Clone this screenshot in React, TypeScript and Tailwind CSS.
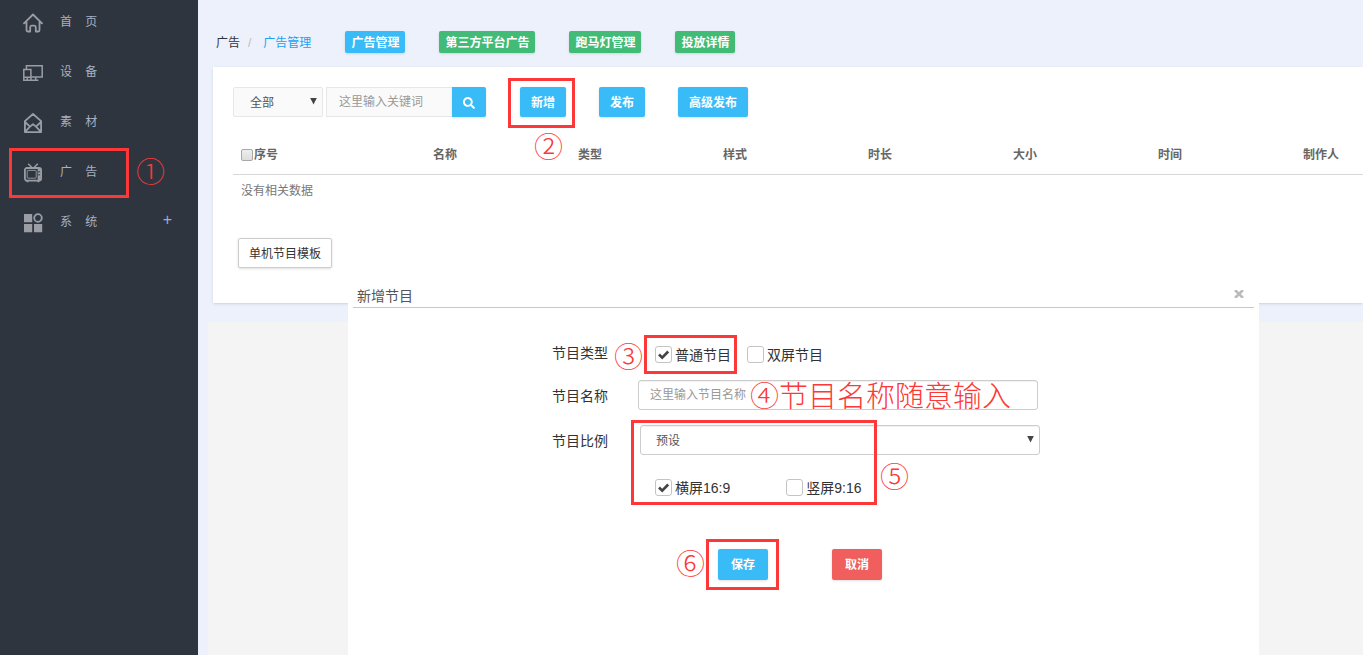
import type { ReactNode } from "react"
import { FaSearch } from "react-icons/fa"

const menu = [
  { label: "首    页", icon: <HomeIcon /> },
  { label: "设    备", icon: <DeviceIcon /> },
  { label: "素    材", icon: <MaterialIcon /> },
  { label: "广    告", icon: <TvIcon /> },
  { label: "系    统", icon: <SystemIcon />, expandable: true },
]

const columns = ["名称", "类型", "样式", "时长", "大小", "时间"]

function HomeIcon() {
  return (
    <svg viewBox="0 0 20 20" className="mt-0.5 size-5" fill="none" stroke="currentColor" strokeWidth="1.8" strokeLinecap="round" strokeLinejoin="round">
      <path d="M1 10.4 10 1.5l9 8.9M3.5 8.8v8.5q0 1.2 1.2 1.2h2.5v-4.3q0-1.6 1.4-1.6h2.8q1.4 0 1.4 1.6v4.3h2.5q1.2 0 1.2-1.2V8.8" />
    </svg>
  )
}

function DeviceIcon() {
  return (
    <svg viewBox="0 0 20 20" className="mt-0.5 size-5" fill="none" stroke="currentColor" strokeWidth="1.5">
      <path d="M3.4 6V2.7h15.8v11.2H8.4M.8 6.4h7.1v10.9H.8zM.8 14.3h7.1M4.3 14.3v3M12.7 14v3M8 17.2h7.4" />
    </svg>
  )
}

function MaterialIcon() {
  return (
    <svg viewBox="0 0 20 20" className="mt-0.5 size-5" fill="none" stroke="currentColor" strokeWidth="1.8" strokeLinejoin="round">
      <path d="M1.9 8.2 10 1l8.1 7.2v10.9H1.9zM2 9l5 4.6 3-2.4 3 2.4L18 9M2 18.8l5-5.2M18 18.8l-5-5.2" />
    </svg>
  )
}

function TvIcon() {
  return (
    <svg viewBox="0 0 20 20" className="mt-0.5 size-5" fill="none" stroke="currentColor">
      <path d="M5.2.8 9.4 5M14.8.8 10.6 5" strokeWidth="1.5" />
      <rect x="1.9" y="5" width="16.2" height="12.6" rx="2" strokeWidth="1.8" />
      <rect x="4.2" y="7.4" width="9" height="7.8" rx="0.8" strokeWidth="0.9" />
      <path d="M16.2 5v12.4" strokeWidth="3" />
      <path d="M16 8v1.6M16 11v1.6" stroke="#2f353f" strokeWidth="1.3" />
      <path d="M4.6 17.5v1.8M15.4 17.5v1.8" strokeWidth="1.8" />
    </svg>
  )
}

function SystemIcon() {
  return (
    <svg viewBox="0 0 20 20" className="mt-0.5 size-5" fill="currentColor">
      <path d="M1 1h8.2v8.2H1zM1 11h8.2v8.2H1zM11 11h8.2v8.2H11z" />
      <circle cx="15" cy="5" r="3.8" fill="none" stroke="currentColor" strokeWidth="1.8" />
    </svg>
  )
}

function CaretIcon() {
  return (
    <svg viewBox="0 0 7 7" className="pointer-events-none absolute top-[11px] right-1.5 size-[7px]" fill="#444">
      <path d="M.2 0h6.6L3.5 6.6z" />
    </svg>
  )
}

function Sidebar() {
  return (
    <aside className="w-[198px] shrink-0 bg-[#2f353f] pt-[7px]">
      <nav className="flex flex-col gap-5 pr-[26px] pl-[23px]">
        {menu.map((item) => (
          <a key={item.label} href="#" className="flex h-[30px] items-center text-[#9a9da3]">
            {item.icon}
            <span className="ml-[17px] whitespace-pre text-[#a7b1c2]">{item.label}</span>
            {item.expandable && <span className="ml-auto pb-1 text-base leading-5 text-[#8fb0e0]">+</span>}
          </a>
        ))}
      </nav>
    </aside>
  )
}

function TabButton({ active, children }: { active?: boolean; children: ReactNode }) {
  return (
    <button
      type="button"
      className={`h-[22px] rounded-xs px-1.5 pt-0.5 font-bold text-white shadow-sm ${active ? "bg-[#39bbf8]" : "bg-[#42bb76]"}`}
    >
      {children}
    </button>
  )
}

function ToolButton({ children }: { children: ReactNode }) {
  return (
    <button type="button" className="h-[30px] rounded-xs bg-[#39bbf8] px-[11px] pt-0.5 font-bold text-white shadow-sm">
      {children}
    </button>
  )
}

function CheckOption({ label, checked }: { label: string; checked?: boolean }) {
  return (
    <label className="flex items-center gap-0.5 text-sm text-[#333]">
      <span className="relative flex size-[18px]">
        <input
          type="checkbox"
          defaultChecked={checked}
          className="peer size-[17px] appearance-none rounded-[3px] border border-[#c4c4c4] bg-white"
        />
        <svg
          viewBox="0 0 17 17"
          className="pointer-events-none absolute top-0 left-0 hidden size-[17px] peer-checked:block"
          fill="none"
          stroke="#444"
          strokeWidth="2.6"
        >
          <path d="m4 8.5 3.2 3.2 6-6.2" />
        </svg>
      </span>
      <span className="leading-5">{label}</span>
    </label>
  )
}

function ProgramTable() {
  return (
    <table className="mt-[17px] w-full table-fixed text-left text-[#666]">
      <thead>
        <tr className="border-b border-[#d8d8d8]">
          <th className="w-[192px] px-2 pt-[11px] pb-[9px]">
            <label className="flex items-center">
              <input
                type="checkbox"
                className="size-3 appearance-none rounded-xs border border-[#a8a8a8] bg-linear-to-b from-[#eee] to-[#ddd]"
              />
              <span className="ml-px">序号</span>
            </label>
          </th>
          {columns.map((name) => (
            <th key={name} className="w-[145px] px-2 pt-[11px] pb-[9px]">
              {name}
            </th>
          ))}
          <th className="px-2 pt-[11px] pb-[9px]">制作人</th>
        </tr>
      </thead>
      <tbody>
        <tr>
          <td colSpan={8} className="px-2 pt-1.5 pb-1 text-[#777]">
            没有相关数据
          </td>
        </tr>
      </tbody>
    </table>
  )
}

function CreateDialog() {
  return (
    <section
      role="dialog"
      aria-labelledby="dialog-title"
      className="absolute top-[265px] right-[104px] bottom-0 left-[348px] bg-white px-[5px] pt-5"
    >
      <header className="flex items-center justify-between border-b border-[#c8c8c8] px-1">
        <h2 id="dialog-title" className="text-sm leading-[22px] text-[#555]">
          新增节目
        </h2>
        <button type="button" aria-label="关闭" className="mr-1.5 pb-1 text-[#bbb]">
          <svg viewBox="0 0 10 8" className="h-2 w-2.5" fill="none" stroke="currentColor" strokeWidth="2.6">
            <path d="m1 0 8 8M9 0 1 8" />
          </svg>
        </button>
      </header>
      <form className="pt-8 pl-[199px] text-sm text-[#333]" onSubmit={(e) => e.preventDefault()}>
        <div className="flex h-[30px] items-center">
          <span className="pb-1">节目类型</span>
          <div className="flex gap-4 pl-[47px]">
            <CheckOption label="普通节目" checked />
            <CheckOption label="双屏节目" />
          </div>
        </div>
        <div className="mt-2.5 flex items-center gap-[30px]">
          <label htmlFor="program-name" className="pt-0.5">
            节目名称
          </label>
          <input
            id="program-name"
            type="text"
            placeholder="这里输入节目名称"
            className="h-[30px] w-[400px] rounded-[3px] border border-[#ccc] px-[11px] text-xs inset-shadow-2xs placeholder:text-[#999]"
          />
        </div>
        <div className="mt-[15px] flex items-center gap-8">
          <label htmlFor="program-ratio" className="pt-0.5">
            节目比例
          </label>
          <div className="relative flex">
            <select
              id="program-ratio"
              className="h-[30px] w-[400px] appearance-none rounded-[3px] border border-[#ccc] bg-white px-[15px] pt-0.5 text-xs text-[#555] inset-shadow-2xs"
            >
              <option>预设</option>
            </select>
            <CaretIcon />
          </div>
        </div>
        <div className="mt-[18px] flex h-[30px] items-center gap-14 pl-[103px]">
          <CheckOption label="横屏16:9" checked />
          <CheckOption label="竖屏9:16" />
        </div>
        <div className="mt-[46px] flex gap-16 pl-[166px] text-xs font-bold text-white">
          <button type="submit" className="h-[31px] rounded-xs bg-[#39bbf8] px-[13px] shadow-sm">
            保存
          </button>
          <button type="button" className="h-[31px] rounded-xs bg-[#f05f5d] px-[13px] shadow-sm">
            取消
          </button>
        </div>
      </form>
    </section>
  )
}

// Numbered walkthrough steps drawn over the screen
function Steps() {
  return (
    <div className="pointer-events-none absolute inset-0 font-['Noto_Sans_CJK_SC',sans-serif] text-[29px] leading-[29px] font-light whitespace-nowrap text-[#fc3838]">
      <div className="absolute top-[148px] left-[9px] h-[50px] w-[120px] border-3" />
      <span className="absolute top-[156px] left-[136px]">①</span>
      <div className="absolute top-[78px] left-[508px] h-[50px] w-[67px] border-3" />
      <span className="absolute top-[131px] left-[534px]">②</span>
      <div className="absolute top-[335px] left-[644px] h-[39px] w-[93px] border-3" />
      <span className="absolute top-[341px] left-[614px]">③</span>
      <span className="absolute top-[380px] left-[750px]">④节目名称随意输入</span>
      <div className="absolute top-[420px] left-[631px] h-[85px] w-[246px] border-3" />
      <span className="absolute top-[461px] left-[880px]">⑤</span>
      <div className="absolute top-[539px] left-[706px] h-[51px] w-[73px] border-3" />
      <span className="absolute top-[548px] left-[676px]">⑥</span>
    </div>
  )
}

export default function App() {
  return (
    <div className="relative flex min-h-screen overflow-hidden bg-[#edf1fb] font-['Liberation_Sans','Noto_Sans_CJK_SC',sans-serif] text-xs leading-5">
      <Sidebar />
      <main className="flex min-w-0 flex-1 flex-col pl-2.5">
        <header className="flex items-center gap-[34px] pt-[31px] pl-2">
          <div className="flex items-center pt-0.5">
            <span className="text-[#333]">广告</span>
            <span className="px-2 text-[#bbb]">/</span>
            <a href="#" className="pl-1 text-[#1ba1f5]">
              广告管理
            </a>
          </div>
          <TabButton active>广告管理</TabButton>
          <TabButton>第三方平台广告</TabButton>
          <TabButton>跑马灯管理</TabButton>
          <TabButton>投放详情</TabButton>
        </header>
        <section className="mt-3.5 ml-[5px] bg-white pt-5 pb-[35px] pl-5 shadow-sm">
          <div className="flex items-center">
            <div className="relative flex">
              <select
                aria-label="分类"
                className="h-[30px] w-[90px] appearance-none rounded-xs border border-[#e7e7e7] bg-[#fafafa] px-4 pt-0.5 text-[#555]"
              >
                <option>全部</option>
              </select>
              <CaretIcon />
            </div>
            <input
              type="text"
              aria-label="关键词"
              placeholder="这里输入关键词"
              className="ml-[3px] h-[30px] w-[126px] border border-r-0 border-[#e7e7e7] bg-[#fafafa] px-3 placeholder:text-[#999]"
            />
            <button
              type="button"
              aria-label="搜索"
              className="flex h-[30px] w-[34px] items-center justify-center rounded-r-xs bg-[#39bbf8] pt-0.5 text-white shadow-sm"
            >
              <FaSearch className="size-3" />
            </button>
            <div className="ml-[34px] flex gap-[33px]">
              <ToolButton>新增</ToolButton>
              <ToolButton>发布</ToolButton>
              <ToolButton>高级发布</ToolButton>
            </div>
          </div>
          <ProgramTable />
          <button
            type="button"
            className="mt-[33px] ml-[5px] h-[30px] rounded-xs border border-[#ccc] bg-white px-2.5 pt-0.5 text-[#333] shadow-sm"
          >
            单机节目模板
          </button>
        </section>
        <div className="mt-[19px] flex-1 bg-[#f4f4f4]" />
      </main>
      <CreateDialog />
      <Steps />
    </div>
  )
}
